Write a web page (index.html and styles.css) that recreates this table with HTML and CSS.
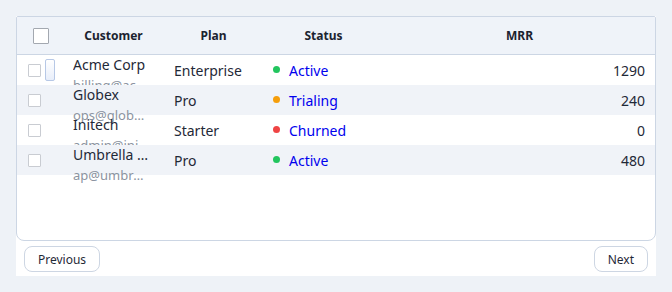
FILE: index.html
```html
<!DOCTYPE html>
<html>
<head>
<meta charset="utf-8">
<link rel="stylesheet" href="styles.css">
</head>
<body>
<div class="panel">
  <div class="table">
    <div class="row head">
      <div class="cell check-head"><span class="box big"></span></div>
      <div class="cell th">Customer</div>
      <div class="cell th">Plan</div>
      <div class="cell th">Status</div>
      <div class="cell th">MRR</div>
    </div>
    <div class="row">
      <div class="cell check"><span class="box"></span><span class="handle"></span></div>
      <div class="cell customer"><span class="name">Acme Corp</span><span class="email">billing@acme.com</span></div>
      <div class="cell">Enterprise</div>
      <div class="cell status"><span class="dot green"></span><a class="link">Active</a></div>
      <div class="cell num">1290</div>
    </div>
    <div class="row alt">
      <div class="cell check"><span class="box"></span></div>
      <div class="cell customer"><span class="name">Globex</span><span class="email">ops@globex.com</span></div>
      <div class="cell">Pro</div>
      <div class="cell status"><span class="dot orange"></span><a class="link">Trialing</a></div>
      <div class="cell num">240</div>
    </div>
    <div class="row">
      <div class="cell check"><span class="box"></span></div>
      <div class="cell customer"><span class="name">Initech</span><span class="email">admin@initech.com</span></div>
      <div class="cell">Starter</div>
      <div class="cell status"><span class="dot red"></span><a class="link">Churned</a></div>
      <div class="cell num">0</div>
    </div>
    <div class="row alt">
      <div class="cell check"><span class="box"></span></div>
      <div class="cell customer"><span class="name">Umbrella Corporation</span><span class="email">ap@umbrella.com</span></div>
      <div class="cell">Pro</div>
      <div class="cell status"><span class="dot green"></span><a class="link">Active</a></div>
      <div class="cell num">480</div>
    </div>
  </div>
  <div class="pager">
    <button class="btn">Previous</button>
    <button class="btn">Next</button>
  </div>
</div>
</body>
</html>
```
FILE: styles.css
```css
* { box-sizing: border-box; }
html, body { margin: 0; }
body {
  background: #eef2f7;
  padding: 16px;
  font-family: "Noto Sans", "DejaVu Sans", sans-serif;
  color: #1f2937;
}
.panel {
  width: 640px;
  height: 260px;
  background: #ffffff;
  display: flex;
  flex-direction: column;
}
.table {
  height: 225px;
  border: 1px solid #ccd6e4;
  border-radius: 2px 2px 8px 8px;
  background: #ffffff;
}
.row {
  position: relative;
  display: grid;
  grid-template-columns: 46px 101px 99px 121px 1fr;
  grid-template-rows: 30px;
  height: 30px;
  font-size: 14px;
}
.row.alt { background: #f0f3f8; }
.row.head {
  height: 38px;
  grid-template-rows: 37px;
  background: #eff3f9;
  border-bottom: 1px solid #ccd6e4;
  border-radius: 2px 2px 0 0;
}
.cell {
  display: flex;
  align-items: center;
  padding: 0 10px;
  min-width: 0;
  white-space: nowrap;
}
.th {
  justify-content: center;
  font-size: 12px;
  font-weight: 700;
  color: #1b2330;
}
.check-head { justify-content: center; padding: 0; }
.check { padding: 0 0 0 11px; gap: 4px; }
.box {
  display: block;
  width: 13px;
  height: 13px;
  border: 1px solid #c9ccd2;
  border-radius: 1px;
  background: #fff;
  flex: none;
}
.box.big {
  width: 16px;
  height: 16px;
  border-color: #a3a8b0;
  margin-left: 1px;
}
.handle {
  display: block;
  width: 10px;
  height: 22px;
  border: 1px solid #b7c8e6;
  border-radius: 2px;
  background: linear-gradient(#ffffff, #e8eefa);
  flex: none;
}
.customer {
  flex-direction: column;
  align-items: stretch;
  justify-content: flex-start;
  padding-right: 15px;
}
.name {
  display: block;
  flex: none;
  line-height: 20px;
  overflow: hidden;
  text-overflow: ellipsis;
  color: #1f2937;
}
.email {
  display: block;
  flex: none;
  margin-top: 2px;
  font-size: 13px;
  line-height: 16px;
  color: #8b93a0;
  overflow: hidden;
  text-overflow: ellipsis;
}
.status { gap: 9px; }
.dot {
  width: 7px;
  height: 7px;
  border-radius: 50%;
  flex: none;
  margin-top: -1px;
}
.green { background: #22c55e; }
.orange { background: #f59e0b; }
.red { background: #ef4444; }
.link { color: #0000ee; }
.num { justify-content: flex-end; }
.pager {
  display: flex;
  justify-content: space-between;
  padding: 5px 8px 0;
}
.btn {
  height: 26px;
  padding: 0 13px;
  border: 1px solid #cdd6e3;
  border-radius: 8px;
  background: #ffffff;
  font-family: "Noto Sans", "DejaVu Sans", sans-serif;
  font-size: 12px;
  color: #1f2937;
}
```
